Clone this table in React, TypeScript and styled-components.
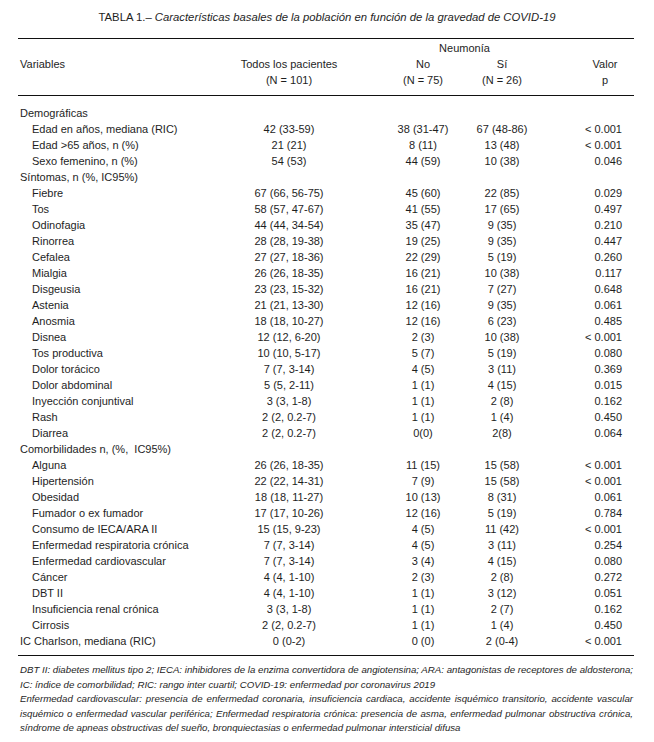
import React from "react";
import styled, { createGlobalStyle } from "styled-components";

const GlobalStyle = createGlobalStyle`
  html, body { margin: 0; padding: 0; background: #ffffff; }
  body { font-family: "Liberation Sans", Arial, sans-serif; color: #1e1e1e; }
`;

const Page = styled.div`
  width: 654px;
  padding-top: 9px;
  box-sizing: border-box;
`;

const Title = styled.div`
  font-size: 11.3px;
  line-height: 16px;
  text-align: center;
  margin-bottom: 13px;
`;

const TitleItalic = styled.span`
  font-style: italic;
`;

const TableWrap = styled.div`
  margin-left: 18px;
  width: 616px;
  font-size: 11px;
`;

const Rule = styled.div`
  height: 1px;
  background: #111;
`;

const Head = styled.div`
  padding: 1px 0 7px;
`;

const Body = styled.div`
  padding: 9px 0 6px;
`;

const Row = styled.div`
  display: grid;
  grid-template-columns: [label] 211px [todos] 120px 35px [no] 78px 1px [si] 78px 31px [p] 50px 12px;
  height: 16px;
  line-height: 16px;
  white-space: pre;
`;

const Label = styled.div<{ $indent?: boolean }>`
  grid-column: label;
  padding-left: ${(p) => (p.$indent ? 14 : 2)}px;
`;

const Cell = styled.div<{ $col: string }>`
  grid-column: ${(p) => p.$col};
  text-align: center;
`;

const PCell = styled.div`
  grid-column: p;
  text-align: right;
`;

const NeumoniaHead = styled.div`
  grid-column: no / span 3;
  text-align: center;
  padding-left: 4px;
`;

const PHead = styled.div`
  grid-column: p;
  text-align: center;
  padding-left: 16px;
`;

const Notes = styled.div`
  margin-left: 18px;
  width: 616px;
  padding: 7px 1px 0 2px;
  box-sizing: border-box;
  font-size: 9.7px;
  line-height: 14.5px;
  font-style: italic;
`;

const NoteLine = styled.div<{ $last?: boolean }>`
  text-align: justify;
  text-align-last: ${(p) => (p.$last ? "left" : "justify")};
  white-space: nowrap;
`;

type DataRow = { label: string; section?: boolean; v?: [string, string, string, string] };

const rows: DataRow[] = [
  { label: "Demográficas", section: true },
  { label: "Edad en años, mediana (RIC)", v: ["42 (33-59)", "38 (31-47)", "67 (48-86)", "< 0.001"] },
  { label: "Edad >65 años, n (%)", v: ["21 (21)", "8 (11)", "13 (48)", "< 0.001"] },
  { label: "Sexo femenino, n (%)", v: ["54 (53)", "44 (59)", "10 (38)", "0.046"] },
  { label: "Síntomas, n (%, IC95%)", section: true },
  { label: "Fiebre", v: ["67 (66, 56-75)", "45 (60)", "22 (85)", "0.029"] },
  { label: "Tos", v: ["58 (57, 47-67)", "41 (55)", "17 (65)", "0.497"] },
  { label: "Odinofagia", v: ["44 (44, 34-54)", "35 (47)", "9 (35)", "0.210"] },
  { label: "Rinorrea", v: ["28 (28, 19-38)", "19 (25)", "9 (35)", "0.447"] },
  { label: "Cefalea", v: ["27 (27, 18-36)", "22 (29)", "5 (19)", "0.260"] },
  { label: "Mialgia", v: ["26 (26, 18-35)", "16 (21)", "10 (38)", "0.117"] },
  { label: "Disgeusia", v: ["23 (23, 15-32)", "16 (21)", "7 (27)", "0.648"] },
  { label: "Astenia", v: ["21 (21, 13-30)", "12 (16)", "9 (35)", "0.061"] },
  { label: "Anosmia", v: ["18 (18, 10-27)", "12 (16)", "6 (23)", "0.485"] },
  { label: "Disnea", v: ["12 (12, 6-20)", "2 (3)", "10 (38)", "< 0.001"] },
  { label: "Tos productiva", v: ["10 (10, 5-17)", "5 (7)", "5 (19)", "0.080"] },
  { label: "Dolor torácico", v: ["7 (7, 3-14)", "4 (5)", "3 (11)", "0.369"] },
  { label: "Dolor abdominal", v: ["5 (5, 2-11)", "1 (1)", "4 (15)", "0.015"] },
  { label: "Inyección conjuntival", v: ["3 (3, 1-8)", "1 (1)", "2 (8)", "0.162"] },
  { label: "Rash", v: ["2 (2, 0.2-7)", "1 (1)", "1 (4)", "0.450"] },
  { label: "Diarrea", v: ["2 (2, 0.2-7)", "0(0)", "2(8)", "0.064"] },
  { label: "Comorbilidades n, (%,  IC95%)", section: true },
  { label: "Alguna", v: ["26 (26, 18-35)", "11 (15)", "15 (58)", "< 0.001"] },
  { label: "Hipertensión", v: ["22 (22, 14-31)", "7 (9)", "15 (58)", "< 0.001"] },
  { label: "Obesidad", v: ["18 (18, 11-27)", "10 (13)", "8 (31)", "0.061"] },
  { label: "Fumador o ex fumador", v: ["17 (17, 10-26)", "12 (16)", "5 (19)", "0.784"] },
  { label: "Consumo de IECA/ARA II", v: ["15 (15, 9-23)", "4 (5)", "11 (42)", "< 0.001"] },
  { label: "Enfermedad respiratoria crónica", v: ["7 (7, 3-14)", "4 (5)", "3 (11)", "0.254"] },
  { label: "Enfermedad cardiovascular", v: ["7 (7, 3-14)", "3 (4)", "4 (15)", "0.080"] },
  { label: "Cáncer", v: ["4 (4, 1-10)", "2 (3)", "2 (8)", "0.272"] },
  { label: "DBT II", v: ["4 (4, 1-10)", "1 (1)", "3 (12)", "0.051"] },
  { label: "Insuficiencia renal crónica", v: ["3 (3, 1-8)", "1 (1)", "2 (7)", "0.162"] },
  { label: "Cirrosis", v: ["2 (2, 0.2-7)", "1 (1)", "1 (4)", "0.450"] },
  { label: "IC Charlson, mediana (RIC)", section: true, v: ["0 (0-2)", "0 (0)", "2 (0-4)", "< 0.001"] },
];

const notes: { text: string; last?: boolean }[] = [
  { text: "DBT II: diabetes mellitus tipo 2;  IECA: inhibidores de la enzima convertidora de angiotensina; ARA: antagonistas de receptores de aldosterona;" },
  { text: "IC: índice de comorbilidad; RIC: rango inter cuartil; COVID-19: enfermedad por coronavirus 2019", last: true },
  { text: "Enfermedad cardiovascular: presencia  de enfermedad coronaria, insuficiencia cardiaca, accidente isquémico transitorio, accidente vascular" },
  { text: "isquémico o enfermedad vascular periférica; Enfermedad respiratoria crónica: presencia de  asma, enfermedad pulmonar obstructiva crónica," },
  { text: "síndrome de apneas obstructivas del sueño, bronquiectasias o enfermedad pulmonar intersticial difusa", last: true },
];

export default function App() {
  return (
    <Page>
      <GlobalStyle />
      <Title>
        TABLA 1.– <TitleItalic>Características basales de la población en función de la gravedad de COVID-19</TitleItalic>
      </Title>
      <TableWrap>
        <Rule />
        <Head>
          <Row>
            <NeumoniaHead>Neumonía</NeumoniaHead>
          </Row>
          <Row>
            <Label>Variables</Label>
            <Cell $col="todos">Todos los pacientes</Cell>
            <Cell $col="no">No</Cell>
            <Cell $col="si">Sí</Cell>
            <PHead>Valor</PHead>
          </Row>
          <Row>
            <Cell $col="todos">(N = 101)</Cell>
            <Cell $col="no">(N = 75)</Cell>
            <Cell $col="si">(N = 26)</Cell>
            <PHead>p</PHead>
          </Row>
        </Head>
        <Rule />
        <Body>
          {rows.map((r, i) => (
            <Row key={i}>
              <Label $indent={!r.section}>{r.label}</Label>
              {r.v && (
                <>
                  <Cell $col="todos">{r.v[0]}</Cell>
                  <Cell $col="no">{r.v[1]}</Cell>
                  <Cell $col="si">{r.v[2]}</Cell>
                  <PCell>{r.v[3]}</PCell>
                </>
              )}
            </Row>
          ))}
        </Body>
        <Rule />
      </TableWrap>
      <Notes>
        {notes.map((n, i) => (
          <NoteLine key={i} $last={n.last}>
            {n.text}
          </NoteLine>
        ))}
      </Notes>
    </Page>
  );
}
